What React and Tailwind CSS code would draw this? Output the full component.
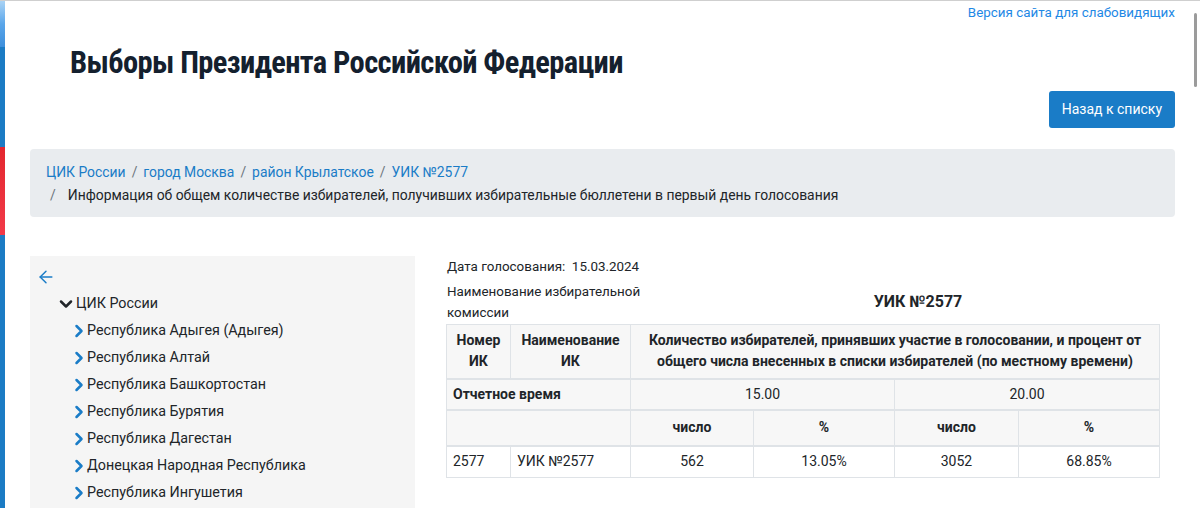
import { ArrowLeft, ChevronDown, ChevronRight } from "lucide-react";

const regions = [
  "Республика Адыгея (Адыгея)",
  "Республика Алтай",
  "Республика Башкортостан",
  "Республика Бурятия",
  "Республика Дагестан",
  "Донецкая Народная Республика",
  "Республика Ингушетия",
];

const crumbs = ["ЦИК России", "город Москва", "район Крылатское", "УИК №2577"];

export default function App() {
  return (
    <div className="relative flex h-[508px] overflow-hidden bg-white border-t border-[#cfcfcf] font-['Roboto',sans-serif] text-[#212529]">
      {/* flag stripe */}
      <div className="flex flex-col w-[5px] shrink-0">
        <div className="h-[46px] bg-gradient-to-b from-[#a9d3f5] via-[#5aa6ea] to-[#3d8fdc]" />
        <div className="h-[100px] bg-[#1b7bc4]" />
        <div className="h-[88px] bg-gradient-to-b from-[#e3262e] to-[#f23a48]" />
        <div className="flex-1 bg-[#1b7bc4]" />
      </div>

      <div className="flex-1 pl-[25px] pr-[25px]">
        <div className="flex justify-end h-[24px] items-center">
          <a className="text-[13.4px] text-[#1e88e5] leading-[24px]">Версия сайта для слабовидящих</a>
        </div>

        <h1 className="mt-[18px] pl-[40px] h-[40px] leading-[40px] text-[30.5px] font-bold tracking-[-0.6px] text-[#14202e] [font-stretch:condensed]">
          Выборы Президента Российской Федерации
        </h1>

        <div className="flex justify-end mt-[8px]">
          <button className="h-[37px] px-[13px] rounded-[3px] bg-[#1a7cc7] text-white text-[14px]">
            Назад к списку
          </button>
        </div>

        <div className="mt-[21px] rounded-[4px] bg-[#e9ecef] pl-[16px] pt-[12px] pb-[10px] text-[13.9px] leading-[23px]">
          <div className="flex">
            {crumbs.map((c, i) => (
              <span key={c} className="flex">
                {i > 0 && <span className="px-[6px] text-[#6c757d]">/</span>}
                <a className="text-[#1a7cc7]">{c}</a>
              </span>
            ))}
          </div>
          <div className="flex">
            <span className="pl-[4px] pr-[12px] text-[#6c757d]">/</span>
            <span>Информация об общем количестве избирателей, получивших избирательные бюллетени в первый день голосования</span>
          </div>
        </div>

        <div className="flex mt-[39px]">
          <div className="w-[385px] h-[300px] shrink-0 bg-[#f5f5f5] pt-[11px] text-[14.3px]">
            <div className="pl-[6px] h-[20px] flex items-center">
              <ArrowLeft size={20} strokeWidth={1.75} className="text-[#1a7cc7]" />
            </div>
            <div className="mt-[3px] pl-[26px] h-[27px] flex items-center">
              <ChevronDown size={20} strokeWidth={3} className="text-[#212529]" />
              <span>ЦИК России</span>
            </div>
            {regions.map((r) => (
              <div key={r} className="pl-[39px] h-[27px] flex items-center">
                <ChevronRight size={20} strokeWidth={3} className="text-[#1a7cc7] -mr-[2px]" />
                <span>{r}</span>
              </div>
            ))}
          </div>

          <div className="ml-[31px] flex-1 text-[14px]">
            <div className="h-[22px] leading-[22px] pl-[1px] text-[13.4px]">Дата голосования:&nbsp; 15.03.2024</div>
            <div className="flex">
              <div className="w-[215px] pl-[1px] leading-[21px] pt-[3px] text-[13.4px]">Наименование избирательной<br />комиссии</div>
              <div className="flex-1 flex items-center justify-center pt-[3px] text-[16px] font-bold">УИК №2577</div>
            </div>
            <table className="mt-[1px] w-[714px] border-collapse text-center">
              <thead>
                <tr className="bg-[#f7f7f7] font-bold h-[54px] border-b-2 border-[#dfe3e7]">
                  <th className="border border-[#dfe3e7] w-[64px] leading-[21px]">Номер<br />ИК</th>
                  <th className="border border-[#dfe3e7] w-[120px] leading-[21px]">Наименование<br />ИК</th>
                  <th colSpan={4} className="border border-[#dfe3e7] leading-[21px] px-[8px]">
                    Количество избирателей, принявших участие в голосовании, и процент от общего числа внесенных в списки избирателей (по местному времени)
                  </th>
                </tr>
                <tr className="bg-[#f7f7f7] h-[31px] border-b-2 border-[#dfe3e7]">
                  <th colSpan={2} className="border border-[#dfe3e7] text-left pl-[6px] font-bold">Отчетное время</th>
                  <th colSpan={2} className="border border-[#dfe3e7] font-normal">15.00</th>
                  <th colSpan={2} className="border border-[#dfe3e7] font-normal">20.00</th>
                </tr>
                <tr className="bg-[#f7f7f7] h-[36px] border-b-2 border-[#dfe3e7] font-bold">
                  <th colSpan={2} className="border border-[#dfe3e7]"></th>
                  <th className="border border-[#dfe3e7] w-[123px]">число</th>
                  <th className="border border-[#dfe3e7] w-[141px]">%</th>
                  <th className="border border-[#dfe3e7] w-[124px]">число</th>
                  <th className="border border-[#dfe3e7]">%</th>
                </tr>
              </thead>
              <tbody>
                <tr className="h-[32px]">
                  <td className="border border-[#dfe3e7] text-left pl-[6px]">2577</td>
                  <td className="border border-[#dfe3e7] text-left pl-[6px]">УИК №2577</td>
                  <td className="border border-[#dfe3e7]">562</td>
                  <td className="border border-[#dfe3e7]">13.05%</td>
                  <td className="border border-[#dfe3e7]">3052</td>
                  <td className="border border-[#dfe3e7]">68.85%</td>
                </tr>
              </tbody>
            </table>
          </div>
        </div>
      </div>

      {/* scrollbar thumb */}
      <div className="absolute right-[3px] top-[12px] w-[3px] h-[74px] rounded-full bg-[#9b9b9b]" />
    </div>
  );
}
